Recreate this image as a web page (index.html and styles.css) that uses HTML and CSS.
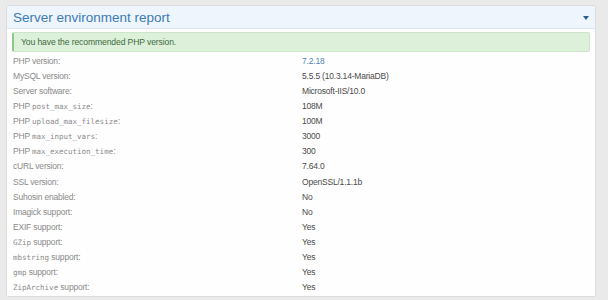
FILE: index.html
```html
<!DOCTYPE html>
<html lang="en">
<head>
    <meta charset="UTF-8">
    <title>Server environment report</title>
    <link rel="stylesheet" href="styles.css">
</head>
<body>
    <div class="block">
        <div class="block-header">
            <h2>Server environment report</h2>
            <span class="caret"></span>
        </div>
        <div class="block-body">
            <div class="notice">You have the recommended PHP version.</div>
            <dl class="pairs">
                <dt>PHP version:</dt><dd class="link">7.2.18</dd>
                <dt>MySQL version:</dt><dd>5.5.5 (10.3.14-MariaDB)</dd>
                <dt>Server software:</dt><dd>Microsoft-IIS/10.0</dd>
                <dt>PHP <code>post_max_size</code>:</dt><dd>108M</dd>
                <dt>PHP <code>upload_max_filesize</code>:</dt><dd>100M</dd>
                <dt>PHP <code>max_input_vars</code>:</dt><dd>3000</dd>
                <dt>PHP <code>max_execution_time</code>:</dt><dd>300</dd>
                <dt>cURL version:</dt><dd>7.64.0</dd>
                <dt>SSL version:</dt><dd>OpenSSL/1.1.1b</dd>
                <dt>Suhosin enabled:</dt><dd>No</dd>
                <dt>Imagick support:</dt><dd>No</dd>
                <dt>EXIF support:</dt><dd>Yes</dd>
                <dt><code>GZip</code> support:</dt><dd>Yes</dd>
                <dt><code>mbstring</code> support:</dt><dd>Yes</dd>
                <dt><code>gmp</code> support:</dt><dd>Yes</dd>
                <dt><code>ZipArchive</code> support:</dt><dd>Yes</dd>
            </dl>
        </div>
    </div>
</body>
</html>
```

FILE: styles.css
```css
* {
    margin: 0;
    padding: 0;
    box-sizing: border-box;
}

body {
    background-color: #eaeaea;
    font-family: 'Liberation Sans', Arial, sans-serif;
    padding: 5px 6px 0 6px;
    width: 602px;
}

.block {
    background-color: #fefefe;
    border: 1px solid #dcdcdc;
    border-radius: 2px;
}

.block-header {
    display: flex;
    align-items: center;
    justify-content: space-between;
    height: 23px;
    padding: 0 6px 0 6px;
    background-color: #eef5fd;
    border-bottom: 1px solid #dde6f0;
}

.block-header h2 {
    font-size: 13.5px;
    font-weight: normal;
    color: #3d7bb2;
}

.caret {
    width: 0;
    height: 0;
    border-left: 3px solid transparent;
    border-right: 3px solid transparent;
    border-top: 4px solid #2e5f8c;
    margin-top: 1px;
}

.block-body {
    padding: 3px 5px 1px 5px;
}

.notice {
    height: 20px;
    line-height: 19px;
    padding-left: 7px;
    font-size: 8.6px;
    letter-spacing: -0.12px;
    color: #3e6b3e;
    background-color: #dcf0da;
    border: 1px solid #cde5ca;
    border-left: 2px solid #8fc98a;
    border-radius: 2px;
    margin-bottom: 1px;
}

.pairs {
    display: grid;
    grid-template-columns: 290px 1fr;
    grid-auto-rows: 15.13px;
    align-items: center;
    font-size: 8.5px;
    letter-spacing: -0.2px;
}

.pairs dt {
    color: #8a8a8a;
    padding-left: 1px;
}

.pairs dd {
    color: #4a4a4a;
}

.pairs dd.link {
    color: #4f86b8;
}

code {
    font-family: 'DejaVu Sans Mono', monospace;
    font-size: 7.5px;
    letter-spacing: 0;
}
```
